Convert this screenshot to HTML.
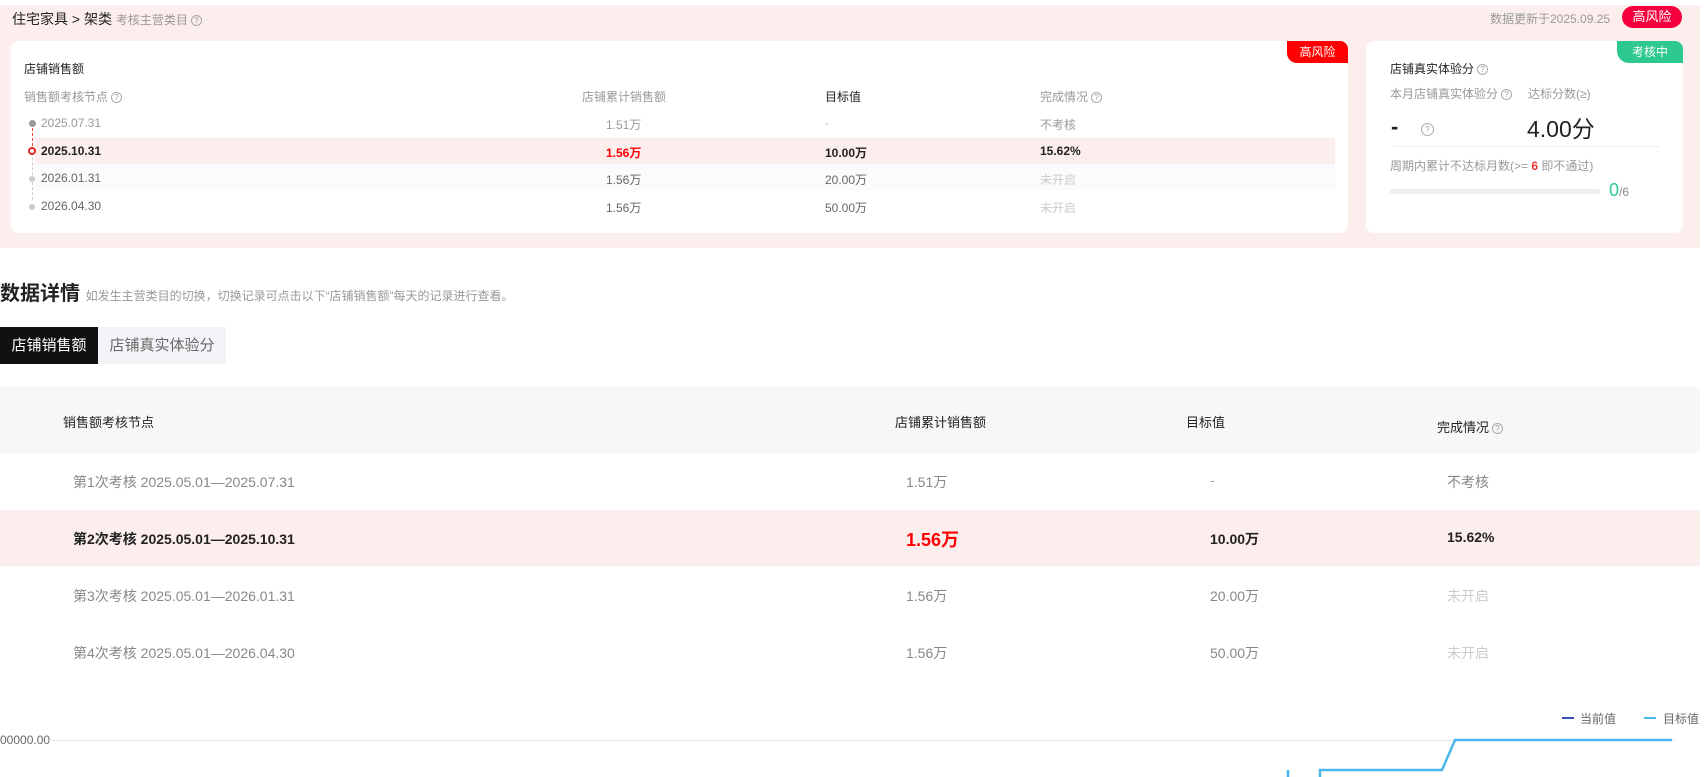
<!DOCTYPE html>
<html><head><meta charset="utf-8"><style>
*{margin:0;padding:0;box-sizing:border-box}
body{width:1705px;height:777px;overflow:hidden;background:#fff;font-family:"Liberation Sans","Noto Sans CJK SC",sans-serif;color:#222;position:relative}
.a{position:absolute;white-space:nowrap}
.g{color:#999}.lg{color:#bbb}
.q{display:inline-block;width:11px;height:11px;border:1px solid #aaa;border-radius:50%;font-size:8px;line-height:9px;text-align:center;color:#999;vertical-align:1px;margin-left:3px}
</style></head><body>
<div class="a" style="left:0;top:5px;width:1700px;height:243px;background:#fdeeee"></div>
<div class="a" style="left:12px;top:9px;font-size:14px">住宅家具 &gt; 架类 <span class="g" style="font-size:12px">考核主营类目<span class="q">?</span></span></div>
<div class="a g" style="left:1490px;top:10px;font-size:12px">数据更新于2025.09.25</div>
<div class="a" style="left:1622px;top:6px;width:60px;height:22px;border-radius:11px;background:#f5003c;color:#fff;font-size:13px;text-align:center;line-height:22px">高风险</div>

<div class="a" style="left:11px;top:41px;width:1337px;height:192px;background:#fff;border-radius:8px"></div>
<div class="a" style="left:1287px;top:41px;width:61px;height:22px;background:#f00;color:#fff;font-size:12px;text-align:center;line-height:22px;border-radius:0 8px 0 10px">高风险</div>
<div class="a" style="left:24px;top:60px;font-size:12px">店铺销售额</div>
<div class="a g" style="left:24px;top:88px;font-size:12px">销售额考核节点<span class="q">?</span></div>
<div class="a g" style="left:582px;top:88px;font-size:12px">店铺累计销售额</div>
<div class="a" style="left:825px;top:88px;font-size:12px">目标值</div>
<div class="a g" style="left:1040px;top:88px;font-size:12px">完成情况<span class="q">?</span></div>
<div class="a" style="left:35px;top:138px;width:1300px;height:26px;background:#fdeeee"></div>
<div class="a" style="left:35px;top:164px;width:1300px;height:26px;background:#fafbfd"></div>
<div class="a" style="left:32px;top:128px;height:72px;border-left:1px dashed #ccc"></div>
<div class="a" style="left:32px;top:128px;height:18px;border-left:1px dashed #f44"></div>
<div class="a" style="left:29px;top:120px;width:7px;height:7px;border-radius:50%;background:#999"></div>
<div class="a" style="left:28px;top:147px;width:8px;height:8px;border-radius:50%;border:2px solid #e22;background:#fff"></div>
<div class="a" style="left:29px;top:176px;width:6px;height:6px;border-radius:50%;background:#ccc"></div>
<div class="a" style="left:29px;top:204px;width:6px;height:6px;border-radius:50%;background:#ccc"></div>
<div class="a g" style="left:41px;top:116px;font-size:12px">2025.07.31</div>
<div class="a" style="left:41px;top:144px;font-size:12px;font-weight:bold">2025.10.31</div>
<div class="a" style="left:41px;top:171px;font-size:12px;color:#666">2026.01.31</div>
<div class="a" style="left:41px;top:199px;font-size:12px;color:#666">2026.04.30</div>
<div class="a g" style="left:606px;top:116px;font-size:12px">1.51万</div>
<div class="a" style="left:606px;top:144px;font-size:12px;font-weight:bold;color:#f00">1.56万</div>
<div class="a" style="left:606px;top:171px;font-size:12px;color:#666">1.56万</div>
<div class="a" style="left:606px;top:199px;font-size:12px;color:#666">1.56万</div>
<div class="a lg" style="left:825px;top:116px;font-size:12px">-</div>
<div class="a" style="left:825px;top:144px;font-size:12px;font-weight:bold">10.00万</div>
<div class="a" style="left:825px;top:171px;font-size:12px;color:#666">20.00万</div>
<div class="a" style="left:825px;top:199px;font-size:12px;color:#666">50.00万</div>
<div class="a g" style="left:1040px;top:116px;font-size:12px">不考核</div>
<div class="a" style="left:1040px;top:144px;font-size:12px;font-weight:bold">15.62%</div>
<div class="a" style="left:1040px;top:171px;font-size:12px;color:#ccc">未开启</div>
<div class="a" style="left:1040px;top:199px;font-size:12px;color:#ccc">未开启</div>

<div class="a" style="left:1366px;top:41px;width:317px;height:192px;background:#fff;border-radius:8px"></div>
<div class="a" style="left:1617px;top:41px;width:66px;height:22px;background:#2ec98f;color:#fff;font-size:12px;text-align:center;line-height:22px;border-radius:0 8px 0 12px">考核中</div>
<div class="a" style="left:1390px;top:60px;font-size:12px">店铺真实体验分<span class="q">?</span></div>
<div class="a g" style="left:1390px;top:85px;font-size:12px">本月店铺真实体验分<span class="q">?</span></div>
<div class="a g" style="left:1528px;top:85px;font-size:12px">达标分数(≥)</div>
<div class="a" style="left:1391px;top:114px;font-size:22px;font-weight:bold">-</div>
<div class="a" style="left:1418px;top:120px"><span class="q" style="width:13px;height:13px;line-height:11px">?</span></div>
<div class="a" style="left:1527px;top:110px;font-size:23px">4.00分</div>
<div class="a" style="left:1394px;top:146px;width:266px;border-top:1px solid #eee"></div>
<div class="a g" style="left:1390px;top:157px;font-size:12px">周期内累计不达标月数(&gt;= <b style="color:#e33">6</b> 即不通过)</div>
<div class="a" style="left:1390px;top:189px;width:210px;height:5px;border-radius:3px;background:#eee"></div>
<div class="a" style="left:1609px;top:180px;font-size:18px;color:#2ec98f">0<span style="font-size:12px;color:#888">/6</span></div>

<div class="a" style="left:0;top:277px;font-size:20px;font-weight:bold">数据详情 <span style="font-size:12px;font-weight:normal;color:#999">如发生主营类目的切换，切换记录可点击以下“店铺销售额”每天的记录进行查看。</span></div>
<div class="a" style="left:0;top:327px;width:98px;height:37px;background:#111;color:#fff;font-size:15px;line-height:37px;text-align:center">店铺销售额</div>
<div class="a" style="left:98px;top:327px;width:128px;height:37px;background:#f3f4f7;color:#666;font-size:15px;line-height:37px;text-align:center">店铺真实体验分</div>

<div class="a" style="left:0;top:387px;width:1700px;height:66px;background:#f6f7f9"></div>
<div class="a" style="left:63px;top:412px;font-size:13px">销售额考核节点</div>
<div class="a" style="left:895px;top:412px;font-size:13px">店铺累计销售额</div>
<div class="a" style="left:1186px;top:412px;font-size:13px">目标值</div>
<div class="a" style="left:1437px;top:417px;font-size:13px">完成情况<span class="q">?</span></div>
<div class="a" style="left:0;top:510px;width:1700px;height:56px;background:#fdeeee"></div>
<div class="a" style="left:73px;top:472px;font-size:14px;color:#888">第1次考核 2025.05.01—2025.07.31</div>
<div class="a" style="left:73px;top:529px;font-size:14px;font-weight:bold">第2次考核 2025.05.01—2025.10.31</div>
<div class="a" style="left:73px;top:586px;font-size:14px;color:#888">第3次考核 2025.05.01—2026.01.31</div>
<div class="a" style="left:73px;top:643px;font-size:14px;color:#888">第4次考核 2025.05.01—2026.04.30</div>
<div class="a" style="left:906px;top:472px;font-size:14px;color:#888">1.51万</div>
<div class="a" style="left:906px;top:526px;font-size:18px;font-weight:bold;color:#f00">1.56万</div>
<div class="a" style="left:906px;top:586px;font-size:14px;color:#888">1.56万</div>
<div class="a" style="left:906px;top:643px;font-size:14px;color:#888">1.56万</div>
<div class="a" style="left:1210px;top:472px;font-size:14px;color:#aaa">-</div>
<div class="a" style="left:1210px;top:529px;font-size:14px;font-weight:bold">10.00万</div>
<div class="a" style="left:1210px;top:586px;font-size:14px;color:#888">20.00万</div>
<div class="a" style="left:1210px;top:643px;font-size:14px;color:#888">50.00万</div>
<div class="a" style="left:1447px;top:472px;font-size:14px;color:#888">不考核</div>
<div class="a" style="left:1447px;top:529px;font-size:14px;font-weight:bold">15.62%</div>
<div class="a" style="left:1447px;top:586px;font-size:14px;color:#ccc">未开启</div>
<div class="a" style="left:1447px;top:643px;font-size:14px;color:#ccc">未开启</div>

<div class="a" style="left:1562px;top:717px;width:12px;height:2px;background:#3a4fc0"></div>
<div class="a" style="left:1580px;top:710px;font-size:12px;color:#666">当前值</div>
<div class="a" style="left:1644px;top:717px;width:12px;height:2px;background:#4bb6ea"></div>
<div class="a" style="left:1663px;top:710px;font-size:12px;color:#666">目标值</div>
<div class="a" style="left:0;top:733px;font-size:12px;color:#666">00000.00</div>
<svg class="a" style="left:0;top:0" width="1705" height="777"><line x1="49" y1="740.5" x2="1675" y2="740.5" stroke="#e6e6e6"/><polyline points="1288,770 1288,790" stroke="#4bb6ea" stroke-width="2.5" fill="none"/><polyline points="1320,790 1320,770 1442,770 1455,740 1672,740" stroke="#4bb6ea" stroke-width="2.5" fill="none"/></svg>
</body></html>
